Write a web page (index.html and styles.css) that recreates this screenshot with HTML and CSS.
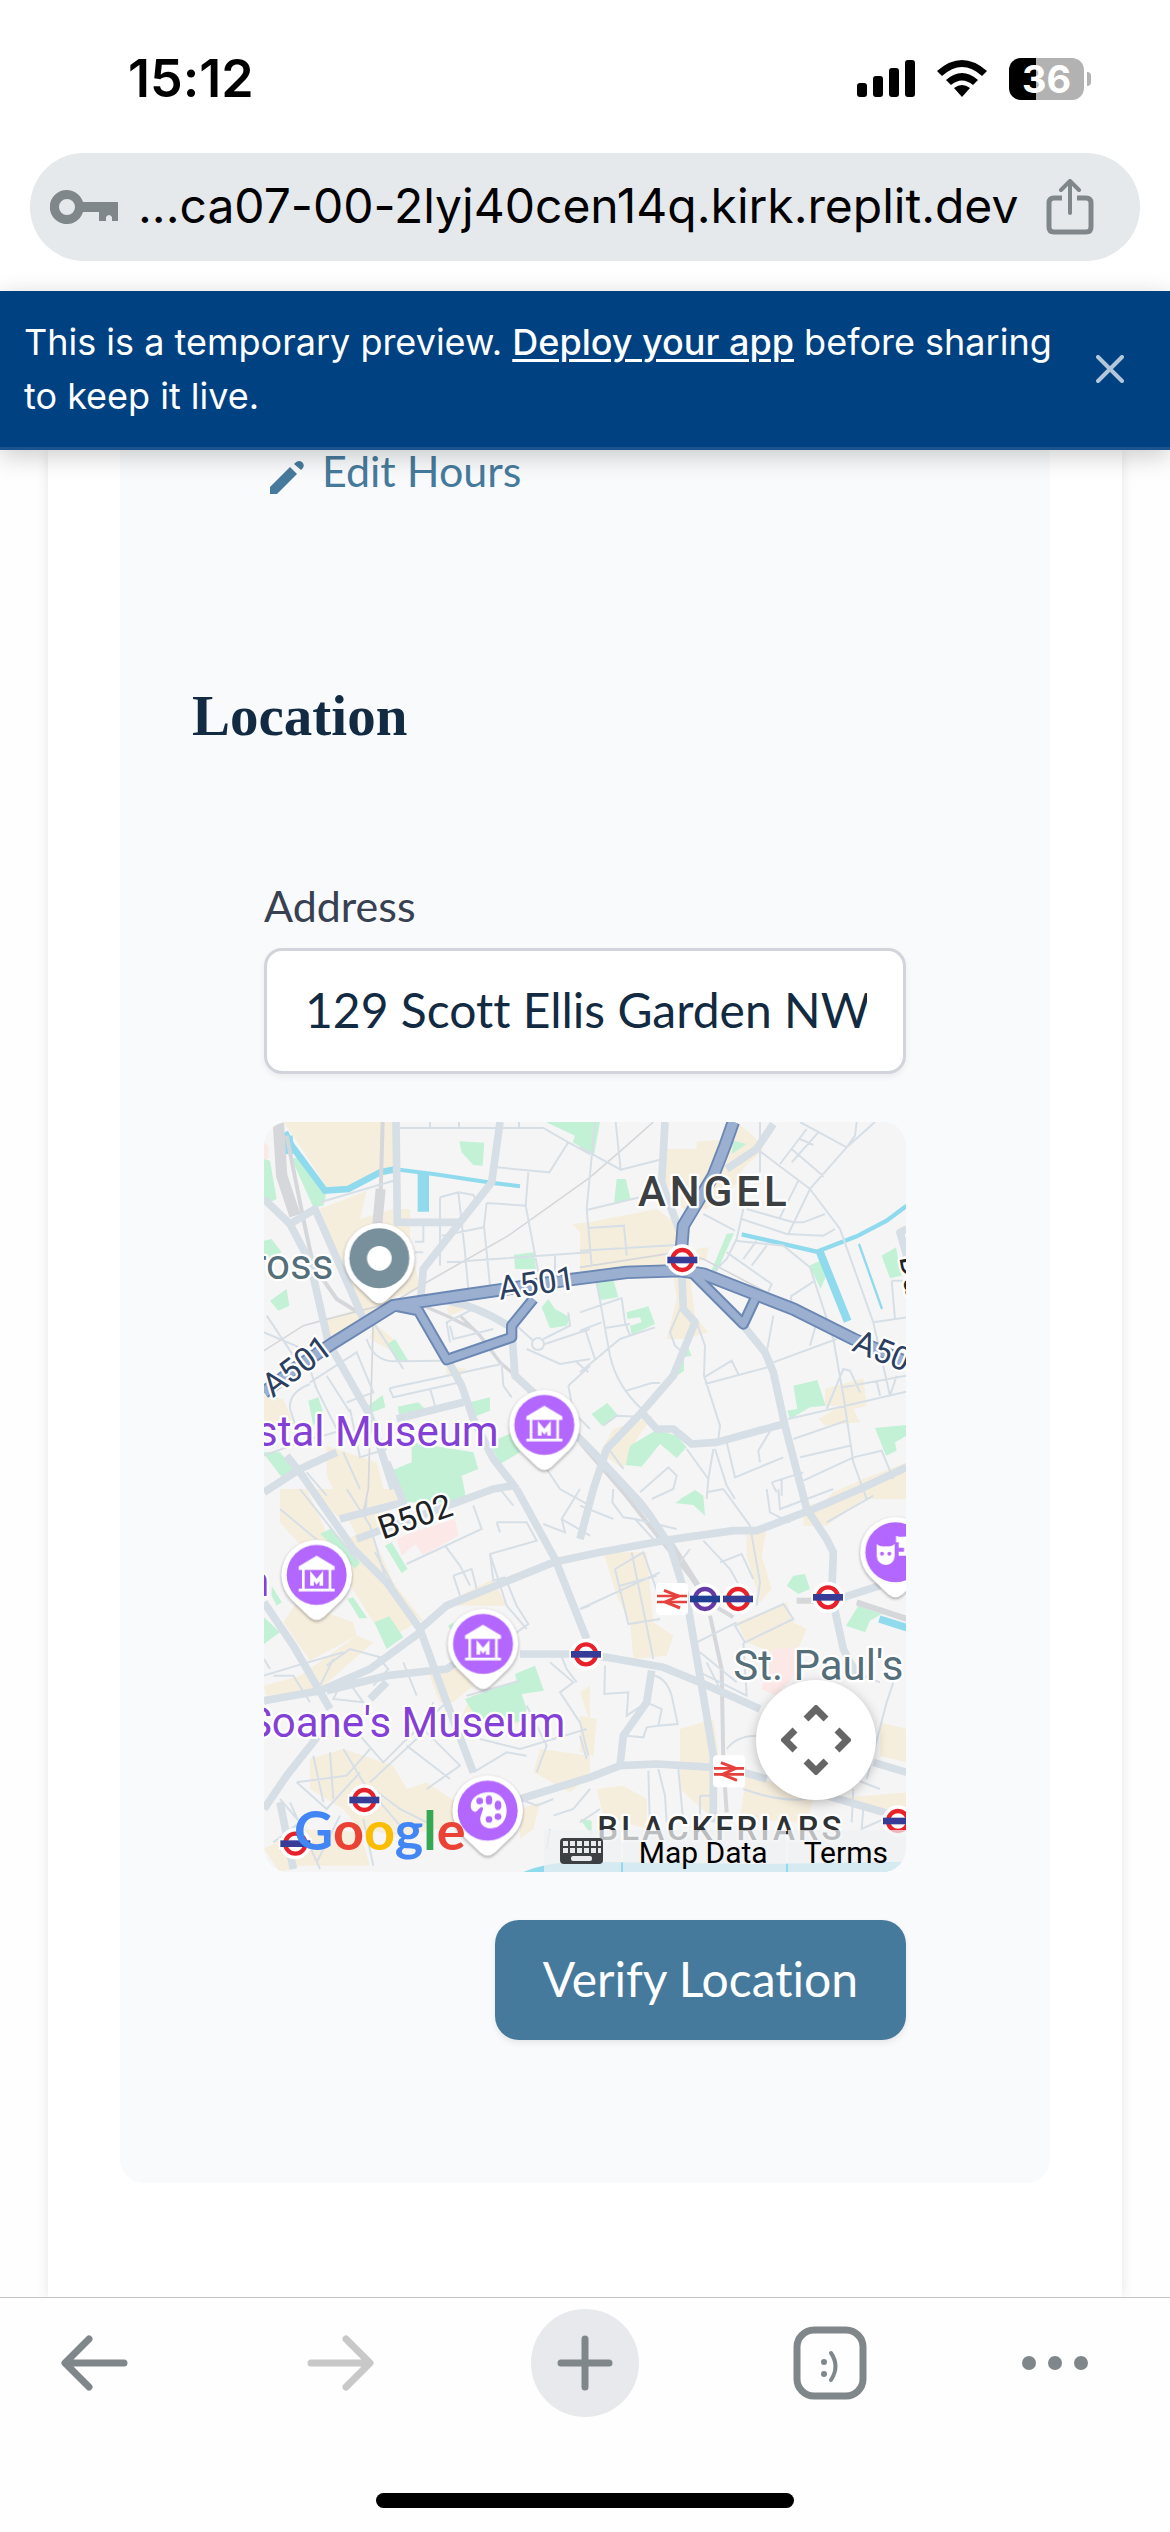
FILE: index.html
```html
<!DOCTYPE html>
<html lang="en">
<head>
<meta charset="utf-8">
<meta name="viewport" content="width=device-width, initial-scale=1">
<title>Location</title>
<link rel="stylesheet" href="styles.css">
</head>
<body>
<header class="chrome">
  <div class="status">
    <span class="clock">15:12</span>
    <div class="indicators">
      <svg width="58" height="38" viewBox="0 0 58 38" aria-hidden="true">
        <rect x="0" y="23" width="10" height="14" rx="3"/><rect x="16" y="16" width="10" height="21" rx="3"/><rect x="32" y="8" width="10" height="29" rx="3"/><rect x="48" y="0" width="10" height="37" rx="3"/>
      </svg>
      <svg width="50" height="38" viewBox="0 0 50 38" aria-hidden="true">
        <path d="M0 11Q25-11 50 11L45 16Q25-2 5 16Z"/><path d="M9 20Q25 6 41 20L36 25Q25 16 14 25Z"/><path d="M17 28Q25 22 33 28L25 37Z"/>
      </svg>
      <div class="battery"><span class="cell">36</span><span class="nub"></span></div>
    </div>
  </div>
  <div class="omnibox">
    <svg width="68" height="34" viewBox="0 0 68 34" aria-hidden="true">
      <path fill="#80878a" fill-rule="evenodd" d="M17 0A17 17 0 0 1 33 12H68V31H62V27Q59 23 56 27V31H49V22H33A17 17 0 1 1 17 0ZM17 9A8 8 0 1 0 17 25A8 8 0 1 0 17 9Z"/>
    </svg>
    <span class="url">...ca07-00-2lyj40cen14q.kirk.replit.dev</span>
    <button class="icon-button" aria-label="Share">
      <svg width="48" height="56" viewBox="0 0 48 56" fill="none" stroke="#80878a" stroke-width="4" stroke-linecap="round" stroke-linejoin="round">
        <path stroke-width="5" stroke-linecap="butt" d="M16 19H8Q3 19 3 24V48Q3 53 8 53H40Q45 53 45 48V24Q45 19 40 19H31"/><path d="M24 34V3M15 11L24 2L33 11"/>
      </svg>
    </button>
  </div>
</header>

<div class="banner">
  <p>This is a temporary preview. <a href="#deploy">Deploy your app</a> before sharing to keep it live.</p>
  <button class="icon-button" aria-label="Dismiss">
    <svg width="28" height="28" viewBox="0 0 28 28" stroke="#b3c6da" stroke-width="4" stroke-linecap="round"><path d="M2 2L26 26M26 2L2 26"/></svg>
  </button>
</div>

<main class="page">
  <div class="card">
    <section class="panel">
      <a class="edit" href="#hours">
        <svg width="34" height="34" viewBox="0 0 34 34" fill="#467a9c" aria-hidden="true"><path d="M0 34V27L20 7L27 14L7 34Z"/><path d="M24 4Q28-1 32 2Q36 6 31 10Z"/></svg>
        <span>Edit Hours</span>
      </a>
      <h2>Location</h2>
      <form class="location">
        <label for="address">Address</label>
        <input id="address" type="text" value="129 Scott Ellis Garden NW8">
        <div class="map">
          <svg class="tiles" viewBox="12 39 1926 2250" preserveAspectRatio="xMidYMid slice" role="img" aria-label="Map">
            <defs>
              <g id="pin"><path fill="#fff" d="M-75 75A106 106 0 1 1 75 75L22 126Q0 145-22 126Z"/></g>
              <g id="museum"><use href="#pin"/><circle r="90" fill="#b367ff"/><path fill="#fff" fill-rule="evenodd" d="M0-58L54-26V-15H44V41H54V49H-54V41H-44V-15H-54V-26ZM-36-15V41H36V-15Z"/><path fill="none" stroke="#fff" stroke-width="11" d="M-14 32V3L0 20L14 3V32"/></g>
              <g id="tube"><circle r="47" fill="#fff"/><rect x="-50" y="-17" width="100" height="34" fill="#fff"/><circle r="30" fill="none" stroke="#e8222a" stroke-width="13"/><rect x="-45" y="-10" width="90" height="20" fill="#373c96"/></g>
              <g id="rail"><rect x="-48" y="-48" width="96" height="96" rx="12" fill="#fff"/><path fill="none" stroke="#e5413d" stroke-width="8" d="M-45-9H45M-45 9H45"/><path fill="none" stroke="#e5413d" stroke-width="9" d="M-24-26L20-9L-20 9L24 27"/></g>
            </defs>
            <rect x="12" y="39" width="1926" height="2250" fill="#f5f5f5"/>

            <!-- built-up areas -->
            <g fill="#f6eedd">
              <path d="M70 39H400V175L340 190L265 240L200 235L110 95ZM180 300L320 245L300 330L400 300H450V400L480 540L400 565L300 640L215 690L180 640L290 600L250 480ZM12 860L70 870L110 960L12 940ZM200 1010L350 1060L400 1250L300 1300L200 1100ZM560 600L600 560L640 590L570 620ZM560 770L620 780L600 805L560 800ZM935 345L990 340V450H965L960 370ZM340 640L400 690L420 740L330 690Z"/>
              <path transform="translate(960)" d="M260 120H350V98L430 92L470 39L520 80L550 120L480 190L500 200L380 300L310 300L255 220ZM0 345L230 300L300 350L290 470L0 490ZM280 500H330L345 620L385 670L320 690L260 690L290 570ZM350 420L385 415L380 450L350 460ZM735 840L850 808L860 890L820 900L840 940L735 950L715 930L780 890L735 890ZM100 960L220 920L170 990L130 1080L60 1030ZM760 1150L850 1110L980 1060V1170H740Z"/>
              <path transform="translate(0 1140)" d="M60 0H140L200 130L330 230L470 400L420 430L340 400L240 240L150 200L60 100ZM160 0H400L420 40L250 100L210 60ZM70 400L110 340L280 400L290 440L150 515ZM290 440L340 460L180 600L20 620L12 590L120 560ZM260 150L330 120L400 280L500 410L440 360ZM560 340L700 270L740 350L600 350ZM500 540H600L640 590L580 640L540 640ZM150 810L250 780L400 830L440 900L500 880L590 940V1010L420 1040L300 1020L250 960L150 900ZM12 1080L120 1020L300 1030L330 1130H120L60 1150ZM840 780L990 800V860L930 910L820 850ZM640 610L740 650L800 700L700 720L600 690ZM780 960L840 940L820 1020L780 1050ZM960 610L990 590V700Z"/>
              <path transform="translate(960 1140)" d="M70 190L200 190L220 400L280 440L260 500L160 510L150 400L110 320ZM500 110L560 120L545 200L575 300L540 340L500 200ZM470 400L620 340L640 400L680 420L650 490L600 500L500 460ZM300 720L400 690L420 830L400 990L300 900ZM50 900L130 890L200 930V1020L70 980ZM500 850L700 930L680 1000L480 990ZM740 930L980 910V970L800 940ZM900 700L980 720V820L900 800ZM670 50L740 40L800 10L850 30L740 110L670 110ZM0 680L50 690L40 800L0 790Z"/>
            </g>
            <g fill="#fce8e6">
              <path d="M12 100L25 110V150H12Z"/><path transform="translate(0 1140)" d="M410 150L460 130L585 90L595 140L490 198L465 165L425 200Z"/><path transform="translate(960 1140)" d="M580 480L640 475L660 540L590 620L545 600Z"/>
            </g>

            <!-- parks -->
            <g fill="#c3f1d5">
              <path d="M598 97L673 101L668 170L640 168L605 130ZM857 39H990V130L938 100L945 80ZM95 150L130 140L200 250L190 290L160 295ZM12 150L30 155L50 270L30 280L12 270ZM12 395L35 390L65 430L12 450ZM30 575L80 540L88 590L55 605ZM383 705L405 690L445 755L410 757ZM762 437L823 430L828 480L765 480ZM845 595L865 570L885 600L930 625L920 650L870 658ZM145 875L175 865L190 910L160 950ZM325 890L368 858L376 895L325 915ZM413 893L475 880L500 905L420 930ZM630 880L690 865V905L640 925ZM12 1030L60 1030L102 1080L65 1105L12 1035ZM455 1000L640 1030L655 1080L605 1100L615 1150V1180H420L393 1085L455 1060ZM690 1000L760 970L780 1030L720 1065Z"/>
              <path transform="translate(960)" d="M0 39H60L42 138L0 115ZM110 210H137L152 270L102 285ZM460 95L500 105L455 135ZM440 375L462 372L410 490H392ZM45 520L100 512L115 565L62 573ZM140 610L205 592L225 645L155 678L150 650L185 640L180 625L142 630ZM320 705L335 740L312 745V785L258 825L280 770ZM35 915L82 882L115 920L65 950ZM150 1010L230 962L290 980L320 1015L290 1047L240 1005L185 1073L137 1068ZM640 830L712 813L737 890L690 895L630 930L622 905L652 900ZM905 440L948 415L965 500L930 508ZM688 470L720 455L738 500L722 540ZM885 957L980 948V980L945 1000L950 1025L918 1040ZM300 1170L345 1145L370 1170Z"/>
              <path transform="translate(0 1140)" d="M180 135L215 118L300 220L285 240L240 190ZM375 170L395 160L443 240L425 252ZM343 400L388 382L430 445L380 480ZM12 385L60 430L12 465ZM35 290L65 340L50 350L35 320ZM262 330L280 325L322 388H298ZM565 410L580 400V440ZM765 555L825 530L852 605L785 615L800 660L790 700L650 690L615 630L770 575ZM960 990L990 995V1020Z"/>
              <path transform="translate(960 1140)" d="M285 42L345 3L370 20L375 80L340 48ZM620 290L640 260L675 255L690 300L655 315ZM798 410L835 350L905 375L870 395L855 430ZM0 990L35 995V1040Z"/>
            </g>

            <!-- canals and river -->
            <g fill="none" stroke="#90daee">
              <path stroke-width="20" d="M75 70L95 110L195 245L265 240L360 190L410 180"/><path stroke-width="26" d="M85 80L88 135"/><path stroke-width="34" d="M490 190V308"/><path stroke-width="12" d="M400 180L520 195L700 222L780 232"/>
              <path stroke-width="13" d="M1445 376L1670 428L1790 382L1880 335L1940 290"/><path stroke-width="24" d="M1680 430L1763 637"/><path stroke-width="7" d="M1797 405L1866 600"/><path stroke-width="22" d="M1858 1530L1940 1556"/>
            </g>
            <path fill="#90daee" d="M790 2289Q850 2262 950 2258L1500 2265L1938 2258V2289Z"/>

            <!-- railways -->
            <g fill="none" stroke="#d5d7da">
              <path stroke-width="34" d="M55 39L65 200L105 320"/><path stroke-width="12" d="M80 80L130 330L160 470L230 570L310 620M368 39L362 250"/><path stroke-width="30" d="M362 240L352 345"/><path stroke-width="10" d="M600 620L660 680L720 760L800 830M490 590L560 620L640 660"/>
              <path stroke-width="5" d="M12 725L130 650L210 628L400 580L500 520L745 380L990 205L1100 110L1180 39M340 620L335 800L325 1140L312 1200M960 475L1250 430L1330 450L1520 550"/>
              <path stroke-width="12" d="M960 1000L1090 1150L1200 1290L1290 1400L1345 1480L1420 1525M1350 1520L1385 1680L1390 1960L1400 2110"/><path stroke-width="18" d="M1230 1300L1320 1440M1610 1475H1700M1790 1480L1940 1530"/>
            </g>

            <!-- side streets -->
            <g fill="none" stroke="#d7dfe6" stroke-width="6">
              <path d="M420 57H850L925 100L990 135M510 39V57M597 39V57M777 39V60M925 100L868 190L710 175M805 190L797 290L680 282M797 290L835 490M540 265L595 250L640 258L655 290M540 265V470M595 250L615 430L625 540M680 282L672 350L690 530M545 380L672 355M560 460L990 430M885 437V490M465 398H490V350M465 430H490M12 670L130 720L170 840M20 620L100 740M180 280L400 215M340 640L430 780M320 690Q340 755 400 757L550 755M388 838L725 765L730 830L755 865M388 838L400 865L600 820M510 838L525 890M770 650L820 695M855 705L990 660M850 690L930 650L925 610M800 720L900 765L990 750M945 755L985 790M925 830L940 910L990 960M925 830L990 770M150 820L290 730L340 850L260 880M165 830L230 960M200 800L270 910M90 900Q85 850 150 825M90 900L110 960M570 700L560 640L640 600M570 650L580 690L700 660M12 1040L120 1000L260 960M250 1030L300 1140M140 1090L200 1160M270 900L300 1045L380 1020M860 1080L900 1140L990 1190"/>
              <circle cx="834" cy="705" r="18"/>
              <path transform="translate(960)" d="M45 39L20 300L35 470M107 39L122 182L0 115M122 182L240 152M20 303L180 265M25 357L132 350L140 440M0 425L290 408M660 39L800 115L885 39M830 39L825 80L800 115L690 240L525 115M680 60L600 165M660 90L700 108M715 70L635 160M635 120L732 203M540 39V190M690 240L625 375M655 215L600 325M690 240L780 360L880 640L930 860M490 300L470 390L440 450L390 500M370 315L465 365M485 330L620 375L730 380L765 360M500 300L640 340H670L735 315M465 395L610 410L690 475L760 690L790 860L820 1060L860 1170M560 410L515 470M530 395L490 450M440 430L575 525L560 560M700 518L633 562L635 590L660 630M580 620L560 730M710 640L690 710M580 760L770 690M880 640L980 625M935 515L945 630M935 515H980M300 600L270 670L285 710L320 740M350 640L375 710L372 800L420 950L415 990M375 825L580 770M372 805L455 755L475 795M0 610L125 567L135 640L150 680M50 520L90 740Q110 830 185 900M0 665L65 640M75 657L150 645M225 655L120 690L0 790M15 660L45 750M140 845L215 822H240M640 990L800 935M660 1045L810 1010M670 1115L820 1045L905 1025L940 1110M625 930L980 848M740 900L790 780L810 785L840 850M790 835L980 800M890 815L900 860M950 800L930 860M70 950L110 920L210 925M90 1025L130 1080M320 1020L385 1110L400 1020M385 1110L380 1170M405 1020L440 1130L465 1170M440 1000L465 1105L610 1045M580 950L535 1025L540 1060M575 1120L670 1090M575 1120L590 1150M605 1110V1160M180 1150L265 1075L290 1100L280 1140L215 1170"/>
              <path transform="translate(0 1140)" d="M260 0L330 110L380 280M120 0L290 215M60 60L240 210M320 30L315 90M345 190L400 290M640 50L665 120L440 225M555 170L600 230L630 290M580 260L635 240L650 300M580 260L600 320M720 0L760 50M710 100H800L830 155L690 195L700 275L735 265M710 100L720 130M690 195L740 350L800 420M735 265L770 350L805 405L770 430M960 0L905 90L915 130L850 105M990 140L905 90M12 560L110 530L250 490M30 540L12 510M200 530L270 480L380 510M150 640L100 560L40 560M260 570L310 640L220 630L240 590M180 590L220 510M430 520L470 620M520 640L480 740L330 880M560 640L430 760L370 820L300 740M110 880L260 860L330 780M110 880L200 960L300 850M160 800L190 940M210 790L220 930M250 780L310 880L420 1010M500 730L600 830L500 900M440 770L570 870M340 900L420 960L520 1010M60 930L120 1000L40 1060M90 940L180 1140M240 980L170 1120M310 990L340 1130M620 620L780 575M660 750L780 780L980 720M640 850L740 790L800 800M800 650L860 770L830 850M870 520L940 580L900 610L960 700L985 800M900 490L920 540L950 580M880 980L940 960L990 900M870 1020L860 1080M780 930L830 950L880 930M960 360L990 350M350 500L385 540L340 590"/>
              <path transform="translate(960 1140)" d="M100 0L97 40L130 85L165 90L220 150M165 90L290 120M0 50L100 90M370 155L450 240L500 330M430 0L510 110L540 280L530 350M420 220L485 195L520 270M330 180L300 220M105 240L190 190L250 360M105 240L145 405L240 390M120 290L230 260M155 190L220 510M0 360L240 250M560 0L570 70L630 100M595 0L600 60L760 0M740 100L880 20M465 410L610 345L640 390L495 460ZM350 460L470 400M360 550L500 620L490 460M380 520L420 600M75 530L73 615L145 610L140 680L200 640L245 660L235 710L200 715L190 745L140 740M225 560Q260 570 275 620L293 705L235 710M360 490L470 580M205 845L210 1020M235 840L255 920L260 1000M295 840L310 1000M360 920V1020M360 920H400M440 780Q470 740 530 740M490 900Q600 940 680 930M820 900L815 1000M850 960L845 1020L980 960M920 640L940 580M920 640L860 870M770 850L900 900M0 740L20 810M790 480L850 560L900 580M380 10L430 0M0 1000L60 960M500 1020L530 980"/>
            </g>

            <!-- main streets -->
            <g fill="none" stroke="#d6dee6" stroke-width="23" stroke-linejoin="round">
              <path d="M408 39L412 340H600M720 39L695 220L600 340L490 480L480 590M12 270L90 345L150 460L205 700L330 920L400 1140M90 345L165 300L310 630M560 575Q650 590 745 650M570 765L605 830L640 930L700 1050L770 1140M757 690L765 800L830 860L1000 1030L1140 1180L1170 1220M410 930L610 880M12 1150L120 1080L230 1030M80 1040L120 1090L280 1320L380 1420L480 1560L560 1780L640 1990M480 1560L560 1490L880 1360L1020 1330L1210 1295L1420 1265H1490L1660 1200L1800 1140L1940 1075M770 1140L885 1350L980 1590M12 1775L180 1745L330 1680L480 1570M200 1745L380 1700L560 1680L620 1640M12 1480L100 1610L210 1800M780 1635H960L1040 1645L1210 1675L1320 1720L1500 1800M240 1230L430 1180L380 1060M290 1290L400 1250L700 1140L760 1130M780 2070L990 2005L1080 1970L1190 1965L1360 1975M12 2100L80 2000L175 1880M60 2080L100 2280M330 1770L380 1720"/>
              <path d="M1215 39L1205 220L1260 370L1270 600L1305 640L1240 800L1145 910L1040 1020L1000 1140L960 1290M1145 910L1190 960H1240L1295 1005L1370 1000L1570 945M1540 45L1490 120L1400 180M1450 650L1515 730L1540 790L1575 950L1640 1200L1700 1290L1720 1330L1715 1460L1750 1620L1790 1700M1100 1140L1170 1220L1230 1310L1280 1470L1330 1760L1360 1940V2140M1080 1970L1090 1880L1160 1780L1175 1685M1450 1990L1520 2010M1700 2060L1940 2130M1750 1465L1860 1430M1840 1960L1940 1990M1940 360L1920 370L1940 440"/>
            </g>

            <!-- A-roads -->
            <g fill="none" stroke-linejoin="round">
              <path stroke="#6b87b3" stroke-width="40" d="M12 850L110 775L215 705L400 590L600 560L930 512L1100 490L1260 485L1330 495L1600 600L1780 690L1940 760M1420 39L1395 110L1360 200L1270 350L1262 450"/>
              <path stroke="#6b87b3" stroke-width="34" d="M400 590L475 605L560 752L755 685V650L820 570M1300 495L1450 645L1485 570"/>
              <path stroke="#9bafd0" stroke-width="29" d="M12 850L110 775L215 705L400 590L600 560L930 512L1100 490L1260 485L1330 495L1600 600L1780 690L1940 760M1420 39L1395 110L1360 200L1270 350L1262 450"/>
              <path stroke="#9bafd0" stroke-width="22" d="M400 590L475 605L560 752L755 685V650L820 570M1300 495L1450 645L1485 570"/>
            </g>

            <!-- labels -->
            <g class="labels">
              <text class="district" x="1134" y="290">ANGEL</text>
              <text class="area" x="1012" y="2192">BLACKFRIARS</text>
              <text class="road a" transform="translate(720 572) rotate(-8)">A501</text>
              <text class="road a" transform="translate(38 868) rotate(-37)">A501</text>
              <text class="road a" transform="translate(1772 724) rotate(22)">A501</text>
              <text class="road" transform="translate(368 1292) rotate(-19)">B502</text>
              <text class="road" transform="translate(1918 445) rotate(80)">Da</text>
              <text class="place" text-anchor="end" x="220" y="510">Cross</text>
              <text class="place" text-anchor="end" x="1930" y="1712">St. Paul's</text>
              <text class="poi" text-anchor="end" x="716" y="1010">Postal Museum</text>
              <text class="poi" text-anchor="end" x="916" y="1883">Soane's Museum</text>
              <text class="poi" text-anchor="end" x="28" y="1460">m</text>
            </g>

            <!-- stations -->
            <use href="#tube" x="1267" y="453"/><use href="#tube" x="1704" y="1465"/><use href="#tube" x="978" y="1636"/><use href="#tube" x="313" y="2073"/><use href="#tube" x="106" y="2204"/><use href="#tube" x="1914" y="2136"/>
            <use href="#rail" x="1236" y="1470"/><use href="#rail" x="1407" y="1987"/>
            <use href="#tube" x="1434" y="1470"/>
            <g transform="translate(1335 1470)"><circle r="47" fill="#fff"/><circle r="30" fill="none" stroke="#653aa5" stroke-width="13"/><rect x="-45" y="-10" width="90" height="20" fill="#1f3e94"/></g>

            <!-- pins -->
            <g class="pins">
              <g transform="translate(358 448)"><use href="#pin"/><circle r="90" fill="#78909c"/><circle r="37" fill="#fff"/></g>
              <use href="#museum" x="853" y="948"/><use href="#museum" x="170" y="1398"/><use href="#museum" x="669" y="1605"/>
              <g transform="translate(683 2105)"><use href="#pin"/><circle r="90" fill="#b367ff"/><path fill="#fff" d="M-50-8C-54-40-25-56 8-56C38-55 57-30 57 0C57 32 35 54 8 53C-12 52-25 38-22 20C-20 10-10-8-16-11C-28-12-30 8-42 2Q-48-1-50-8Z"/><g fill="#b367ff"><circle cx="-24" cy="-29" r="10"/><ellipse cx="4" cy="-32" rx="10" ry="14"/><ellipse cx="31" cy="-16" rx="10" ry="14"/><circle cx="31" cy="18" r="10"/><circle cx="4" cy="26" r="10"/></g></g>
              <g transform="translate(1906 1330)"><use href="#pin"/><circle r="90" fill="#b367ff"/><path fill="#fff" d="M-56-26Q-48-16-28-18Q-10-16-2-26V10Q-4 36-28 38Q-54 36-56 10Z"/><path fill="#fff" d="M2-50Q20-42 50-52V10H10V-2H26V-14H10V-30H2Z"/><g fill="#b367ff"><circle cx="-40" cy="4" r="6"/><circle cx="-18" cy="4" r="6"/></g></g>
            </g>
          </svg>
          <a class="google" href="#maps" aria-label="Google"><span class="b">G</span><span class="r">o</span><span class="y">o</span><span class="b">g</span><span class="g">l</span><span class="r">e</span></a>
          <button class="pan" type="button" aria-label="Map camera controls">
            <svg width="70" height="70" viewBox="0 0 70 70" fill="none" stroke="#666" stroke-width="7"><path d="M25 14L35 4L45 14M25 56L35 66L45 56M14 25L4 35L14 45M56 25L66 35L56 45"/></svg>
          </button>
          <div class="attribution">
            <button class="keys" type="button" aria-label="Keyboard shortcuts">
              <svg width="43" height="26" viewBox="0 0 43 26"><rect width="43" height="26" rx="4" fill="#3c4043"/><path fill="#e8eaed" d="M3 3h5v5H3zM10 3h5v5h-5zM17 3h5v5h-5zM24 3h5v5h-5zM31 3h5v5h-5zM38 3h3v5h-3zM3 10h5v5H3zM10 10h5v5h-5zM17 10h5v5h-5zM24 10h5v5h-5zM31 10h5v5h-5zM38 10h3v5h-3z"/><rect x="11" y="18" width="21" height="5" rx="2" fill="#e8eaed"/></svg>
            </button>
            <button type="button">Map Data</button>
            <a href="#terms">Terms</a>
          </div>
        </div>
        <button class="verify" type="button">Verify Location</button>
      </form>
    </section>
  </div>
</main>

<footer class="toolbar">
  <nav class="tools" aria-label="Browser">
    <button class="icon-button" aria-label="Back"><svg width="68" height="56" viewBox="0 0 68 56" fill="none" stroke="#80878a" stroke-width="7" stroke-linecap="round" stroke-linejoin="round"><path d="M63 28H5M28 4L4 28L28 52"/></svg></button>
    <button class="icon-button" aria-label="Forward"><svg width="68" height="56" viewBox="0 0 68 56" fill="none" stroke="#c8c8c8" stroke-width="7" stroke-linecap="round" stroke-linejoin="round"><path d="M5 28H63M40 4L64 28L40 52"/></svg></button>
    <button class="icon-button new-tab" aria-label="New tab"><svg width="56" height="56" viewBox="0 0 56 56" stroke="#80878a" stroke-width="7" stroke-linecap="round"><path d="M28 4V52M4 28H52"/></svg></button>
    <button class="icon-button" aria-label="Tabs"><svg width="74" height="74" viewBox="0 0 74 74" fill="none" stroke="#80878a"><rect x="4" y="4" width="66" height="66" rx="17" stroke-width="7"/><path stroke-width="4" stroke-linecap="round" d="M38 27Q47 40 38 54"/><g fill="#80878a" stroke="none"><circle cx="31" cy="36" r="3"/><circle cx="31" cy="48" r="3"/></g></svg></button>
    <button class="icon-button more" aria-label="More"><svg width="68" height="16" viewBox="0 0 68 16" fill="#80878a"><circle cx="8" cy="8" r="7"/><circle cx="34" cy="8" r="7"/><circle cx="60" cy="8" r="7"/></svg></button>
  </nav>
  <div class="home-bar"></div>
</footer>
</body>
</html>
```
FILE: styles.css
```css
* { box-sizing: border-box; }

body {
  margin: 0;
  min-height: 100vh;
  display: flex;
  flex-direction: column;
  background: #fefefe;
  color: #122b42;
  font-family: Lato, "Open Sans", sans-serif;
  font-variant-ligatures: none;
}

button { font: inherit; font-variant-ligatures: none; cursor: pointer; }

.icon-button {
  display: grid;
  place-items: center;
  padding: 0;
  border: 0;
  background: none;
}

svg { display: block; }

/* Status row and address bar */
.chrome {
  padding: 0 30px 30px;
  background: #fff;
  font-family: Inter, sans-serif;
}

.status {
  display: flex;
  align-items: center;
  justify-content: space-between;
  height: 153px;
  padding: 4px 49px 0 98px;
}

.clock { color: #000; font-size: 52px; font-weight: 600; }

.indicators { display: flex; align-items: center; gap: 22px; }

.battery { display: flex; align-items: center; gap: 3px; }

.cell {
  width: 75px;
  height: 42px;
  border-radius: 12px;
  background: linear-gradient(90deg, #000 36%, #b2b2b2 36%);
  color: #fff;
  font-size: 38px;
  font-weight: 700;
  line-height: 42px;
  text-align: center;
}

.nub { width: 4px; height: 14px; border-radius: 0 4px 4px 0; background: #b2b2b2; }

.omnibox {
  display: flex;
  align-items: center;
  height: 108px;
  padding: 0 46px 0 20px;
  border-radius: 54px;
  background: #e5e9ec;
}

.url {
  flex: 1;
  min-width: 0;
  padding: 0 0 4px 20px;
  color: #000;
  font-size: 48px;
  white-space: nowrap;
}

/* Preview notice */
.banner {
  position: relative;
  display: flex;
  align-items: center;
  justify-content: space-between;
  gap: 24px;
  padding: 24px 46px 24px 24px;
  border-bottom: 3px solid #1c528e;
  background: #004182;
  box-shadow: 0 6px 24px rgba(0, 0, 0, .2);
  color: #fff;
  font-family: Inter, sans-serif;
}

.banner p { margin: 0; font-size: 36px; line-height: 54px; }

.banner a {
  color: inherit;
  font-weight: 500;
  text-decoration-thickness: 3px;
  text-underline-offset: 4px;
}

/* Page content */
.page { flex: 1; display: flex; padding: 0 48px; }

.card {
  flex: 1;
  min-width: 0;
  padding: 0 72px 112px;
  background: #fff;
  box-shadow: 0 0 12px rgba(0, 0, 0, .1);
}

.panel {
  padding: 0 72px 143px;
  border-radius: 0 0 24px 24px;
  background: #f9fafc;
}

.edit {
  display: flex;
  align-items: center;
  gap: 18px;
  height: 44px;
  margin-left: 78px;
  color: #467a9c;
  font-size: 43px;
  text-decoration: none;
}

.edit svg { align-self: flex-end; }
.edit span { padding-bottom: 4px; }

h2 {
  margin: 0;
  padding-top: 190px;
  font-family: "Liberation Serif", serif;
  font-size: 57px;
  font-weight: 700;
  line-height: 64px;
}

.location {
  display: flex;
  flex-direction: column;
  padding: 128px 72px 0;
}

.location label {
  padding-bottom: 12px;
  color: #374151;
  font-size: 43px;
  line-height: 60px;
}

.location input {
  width: 100%;
  height: 126px;
  padding: 0 36px 4px 38px;
  border: 3px solid #d1d5db;
  border-radius: 18px;
  background: #fff;
  box-shadow: 0 3px 6px rgba(0, 0, 0, .06);
  color: inherit;
  font: inherit;
  font-size: 48px;
  font-variant-ligatures: none;
}

.map {
  position: relative;
  overflow: hidden;
  margin-top: 48px;
  border-radius: 24px;
  background: #f5f5f5;
  font-family: Roboto, sans-serif;
}

.tiles { width: 100%; height: auto; }

.labels text { paint-order: stroke; stroke: #fff; stroke-width: 14px; stroke-linejoin: round; }
.district { font-size: 126px; font-weight: 500; letter-spacing: 12px; fill: #3c4043; }
.area { font-size: 99px; font-weight: 500; letter-spacing: 9px; fill: #2f3235; }
.road { font-size: 99px; fill: #202124; }
.road.a { fill: #2b4060; }
.place { font-size: 126px; fill: #546e7a; }
.poi { font-size: 126px; fill: #8440d6; }
.pins { filter: drop-shadow(0 4px 4px rgba(0, 0, 0, .35)); }

.google {
  position: absolute;
  left: 30px;
  bottom: 12px;
  font-family: Lato, sans-serif;
  font-size: 54px;
  font-weight: 700;
  line-height: 60px;
  text-decoration: none;
}

.google .b { color: #4285f4; }
.google .r { color: #ea4335; }
.google .y { color: #fbbc04; }
.google .g { color: #34a853; }

.pan {
  position: absolute;
  right: 30px;
  bottom: 72px;
  display: grid;
  place-items: center;
  width: 120px;
  height: 120px;
  padding: 0;
  border: 0;
  border-radius: 50%;
  background: #fff;
  box-shadow: 0 3px 12px rgba(0, 0, 0, .25);
}

.attribution {
  position: absolute;
  right: 0;
  bottom: 0;
  display: flex;
  gap: 2px;
  height: 42px;
  font-size: 30px;
  line-height: 38px;
}

.attribution > * {
  padding: 4px 18px 0 16px;
  border: 0;
  background: rgba(240, 241, 242, .72);
  color: #000;
  text-decoration: none;
}

.attribution .keys { padding-top: 0; }

.verify {
  align-self: flex-end;
  height: 120px;
  margin-top: 48px;
  padding: 0 48px 4px;
  border: 0;
  border-radius: 24px;
  background: #467a9c;
  box-shadow: 0 3px 6px rgba(0, 0, 0, .08);
  color: #fff;
  font-size: 48px;
}

/* Bottom toolbar */
.toolbar {
  position: relative;
  border-top: 1px solid #c4c4c6;
  background: #fefefe;
}

.tools {
  display: flex;
  align-items: center;
  justify-content: space-between;
  height: 130px;
  padding: 0 41px;
}

.tools .icon-button { width: 108px; height: 108px; border-radius: 50%; }
.tools .new-tab { background: #e8e9ed; }
.tools .more { justify-items: start; }

.home-bar {
  width: 418px;
  height: 15px;
  margin: 65px auto 24px;
  border-radius: 8px;
  background: #000;
}
```
